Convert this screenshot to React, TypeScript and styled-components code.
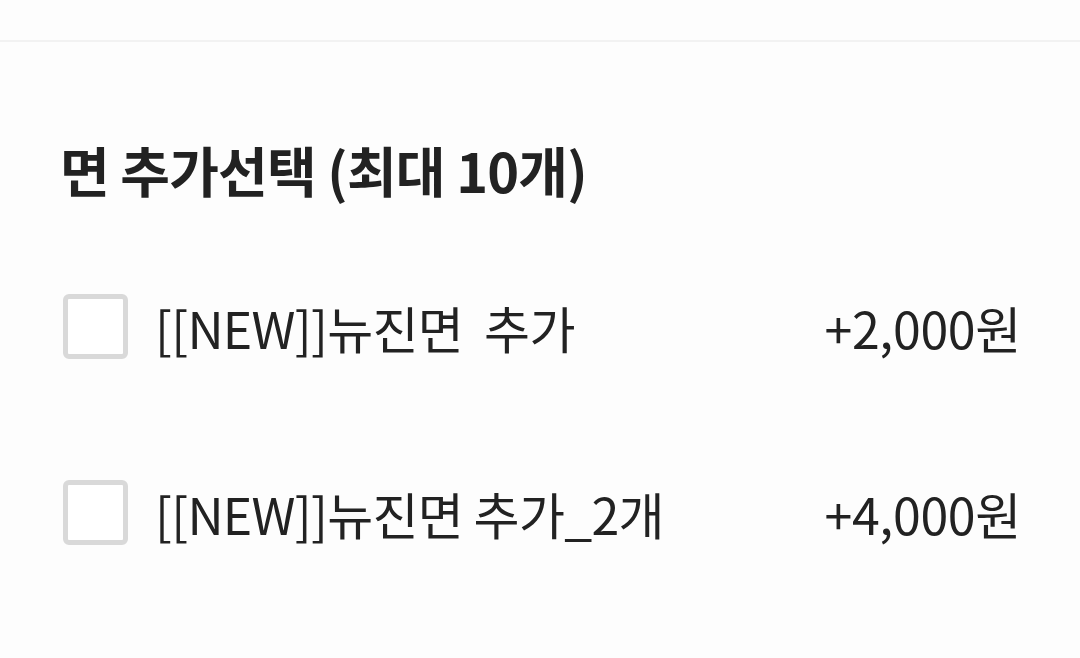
import React, { useState } from 'react';
import styled, { createGlobalStyle } from 'styled-components';

const GlobalStyle = createGlobalStyle`
  html, body {
    margin: 0;
    padding: 0;
    background: #fdfdfd;
  }
  body {
    font-family: "Noto Sans CJK KR", "Noto Sans", sans-serif;
    color: #222;
  }
`;

const Page = styled.div`
  width: 1080px;
  height: 658px;
  background: #fdfdfd;
  overflow: hidden;
`;

const TopSpace = styled.div`
  height: 40px;
  border-bottom: 2px solid #f2f2f2;
`;

const Section = styled.section`
  padding: 98px 59px 0 60px;
`;

const Title = styled.h2`
  margin: 0;
  font-size: 54px;
  font-weight: 700;
  line-height: 60px;
  letter-spacing: -0.8px;
  color: #222;
`;

const OptionList = styled.ul`
  list-style: none;
  margin: 94px 0 0;
  padding: 0;
  display: flex;
  flex-direction: column;
  gap: 121px;
`;

const Option = styled.li`
  display: flex;
  align-items: center;
  height: 65px;
  cursor: pointer;
`;

const Box = styled.span<{ $checked: boolean }>`
  flex: none;
  box-sizing: border-box;
  width: 65px;
  height: 65px;
  margin-left: 3px;
  border: 5px solid ${p => (p.$checked ? '#222' : '#d9d9d9')};
  border-radius: 6px;
  background: #fff;
`;

const Label = styled.span`
  flex: 1;
  margin-left: 27px;
  font-size: 50px;
  line-height: 60px;
  letter-spacing: -0.7px;
  white-space: pre;
  color: #222;
`;

const Price = styled.span`
  font-size: 50px;
  line-height: 60px;
  letter-spacing: -0.3px;
  color: #222;
`;

const options = [
  { name: '[[NEW]]뉴진면  추가', price: 2000 },
  { name: '[[NEW]]뉴진면 추가_2개', price: 4000 },
];

export default function App() {
  const [checked, setChecked] = useState<boolean[]>(options.map(() => false));

  const toggle = (i: number) =>
    setChecked(prev => prev.map((c, j) => (j === i ? !c : c)));

  return (
    <Page>
      <GlobalStyle />
      <TopSpace />
      <Section>
        <Title>면 추가선택 (최대 10개)</Title>
        <OptionList>
          {options.map((o, i) => (
            <Option key={i} onClick={() => toggle(i)}>
              <Box $checked={checked[i]} />
              <Label>{o.name}</Label>
              <Price>+{o.price.toLocaleString('ko-KR')}원</Price>
            </Option>
          ))}
        </OptionList>
      </Section>
    </Page>
  );
}
